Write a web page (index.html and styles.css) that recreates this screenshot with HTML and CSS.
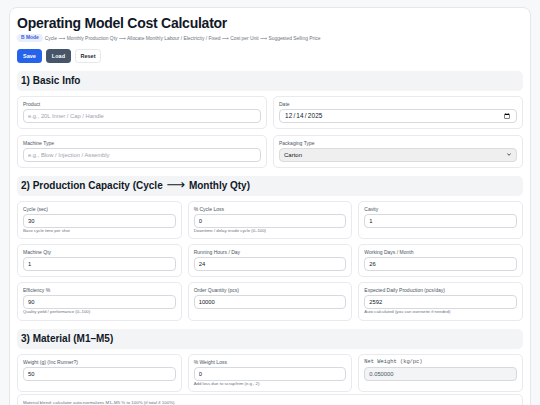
FILE: index.html
```html
<!DOCTYPE html>
<html lang="en">
<head>
<meta charset="utf-8">
<title>Operating Model Cost Calculator</title>
<link rel="stylesheet" href="styles.css">
</head>
<body>
<div class="wrap">
  <h1 class="title">Operating Model Cost Calculator</h1>
  <div class="sub">
    <span class="badge">B Mode</span>
    <span class="flow">Cycle <span class="arr">⟶</span> Monthly Production Qty <span class="arr">⟶</span> Allocate Monthly Labour / Electricity / Fixed <span class="arr">⟶</span> Cost per Unit <span class="arr">⟶</span> Suggested Selling Price</span>
  </div>
  <div class="actions">
    <button class="btn btn-save">Save</button>
    <button class="btn btn-load">Load</button>
    <button class="btn btn-reset">Reset</button>
  </div>

  <h2 class="section">1) Basic Info</h2>
  <div class="grid grid-2">
    <div class="field">
      <label class="lbl">Product</label>
      <input class="inp" type="text" placeholder="e.g., 20L Inner / Cap / Handle">
    </div>
    <div class="field">
      <label class="lbl">Date</label>
      <input class="inp inp-date" type="date" value="2025-12-14">
    </div>
    <div class="field">
      <label class="lbl">Machine Type</label>
      <input class="inp" type="text" placeholder="e.g., Blow / Injection / Assembly">
    </div>
    <div class="field">
      <label class="lbl">Packaging Type</label>
      <div class="sel-wrap">
        <select class="inp sel"><option>Carton</option></select>
        <svg class="chev" viewBox="0 0 8 5" width="4" height="3"><path d="M1 1 L4 4 L7 1" fill="none" stroke="#222" stroke-width="1.6" stroke-linecap="round" stroke-linejoin="round"/></svg>
      </div>
    </div>
  </div>

  <h2 class="section">2) Production Capacity (Cycle <span class="arr arr-lg">⟶</span> Monthly Qty)</h2>
  <div class="grid grid-3">
    <div class="field">
      <label class="lbl">Cycle (sec)</label>
      <input class="inp" type="text" value="30">
      <div class="hint">Base cycle time per shot</div>
    </div>
    <div class="field">
      <label class="lbl">% Cycle Loss</label>
      <input class="inp" type="text" value="0">
      <div class="hint">Downtime / delay inside cycle (0–100)</div>
    </div>
    <div class="field">
      <label class="lbl">Cavity</label>
      <input class="inp" type="text" value="1">
    </div>
    <div class="field">
      <label class="lbl">Machine Qty</label>
      <input class="inp" type="text" value="1">
    </div>
    <div class="field">
      <label class="lbl">Running Hours / Day</label>
      <input class="inp" type="text" value="24">
    </div>
    <div class="field">
      <label class="lbl">Working Days / Month</label>
      <input class="inp" type="text" value="26">
    </div>
    <div class="field">
      <label class="lbl">Efficiency %</label>
      <input class="inp" type="text" value="90">
      <div class="hint">Quality yield / performance (0–100)</div>
    </div>
    <div class="field">
      <label class="lbl">Order Quantity (pcs)</label>
      <input class="inp" type="text" value="10000">
    </div>
    <div class="field">
      <label class="lbl">Expected Daily Production (pcs/day)</label>
      <input class="inp" type="text" value="2592">
      <div class="hint">Auto calculated (you can overwrite if needed)</div>
    </div>
  </div>

  <h2 class="section">3) Material (M1–M5)</h2>
  <div class="grid grid-3">
    <div class="field">
      <label class="lbl">Weight (g) (Inc Runner?)</label>
      <input class="inp" type="text" value="50">
    </div>
    <div class="field">
      <label class="lbl">% Weight Loss</label>
      <input class="inp" type="text" value="0">
      <div class="hint">Add loss due to scrap/trim (e.g., 2)</div>
    </div>
    <div class="field">
      <label class="lbl lbl-mono">Net Weight (kg/pc)</label>
      <input class="inp inp-ro" type="text" value="0.050000" readonly>
    </div>
  </div>
  <div class="note">Material blend: calculator auto-normalizes M1–M5 % to 100% (if total ≠ 100%).</div>
</div>
</body>
</html>
```
FILE: styles.css
```css
* { box-sizing: border-box; }
html, body { margin: 0; padding: 0; }
body {
  background: #f7f8fa;
  font-family: "Liberation Sans", Arial, sans-serif;
  color: #111827;
}
.wrap {
  margin: 7px 9px 0;
  background: #ffffff;
  border: 1px solid #e5e7eb;
  border-radius: 8px;
  padding: 7px 7px 20px;
}
.title {
  margin: 0;
  font-size: 14px;
  line-height: 16px;
  font-weight: 700;
  letter-spacing: -0.25px;
  color: #111827;
}
.sub {
  margin-top: 3px;
  height: 8px;
  display: flex;
  align-items: center;
  gap: 2px;
}
.badge {
  display: inline-block;
  height: 8px;
  line-height: 8px;
  padding: 0 4px;
  border-radius: 4px;
  background: #e8eefd;
  color: #3b5bdb;
  font-size: 4.9px;
  font-weight: 600;
}
.flow {
  font-size: 4.9px;
  color: #6b7280;
  white-space: nowrap;
}
.arr {
  font-family: "DejaVu Sans", sans-serif;
  font-weight: 400;
}
.arr-lg { font-size: 1.3em; line-height: 0; margin: 0 1px; }
.actions {
  margin-top: 7px;
  display: flex;
  gap: 4px;
}
.btn {
  height: 14px;
  padding: 0 5px;
  border-radius: 3.5px;
  font-family: "Liberation Sans", Arial, sans-serif;
  font-size: 5.5px;
  font-weight: 700;
  border: 1px solid transparent;
  cursor: pointer;
}
.btn-save { background: #2563eb; color: #ffffff; }
.btn-load { background: #475569; color: #ffffff; }
.btn-reset { background: #ffffff; color: #1f2937; border-color: #e5e7eb; padding: 0 4.5px; }
.section {
  margin: 8px 0 5px;
  height: 20px;
  line-height: 20px;
  padding: 0 4px;
  background: #f3f4f6;
  border-radius: 5px;
  font-size: 10px;
  font-weight: 700;
  color: #111827;
}
.grid {
  display: grid;
  column-gap: 6px;
  row-gap: 5.5px;
}
.grid-2 { grid-template-columns: 1fr 1fr; }
.grid-3 { grid-template-columns: 1fr 1fr 1fr; row-gap: 5px; }
.field {
  border: 1px solid #e9eaee;
  border-radius: 5px;
  padding: 4px 5px 5px;
  background: #ffffff;
}
.lbl {
  display: block;
  font-size: 5px;
  line-height: 7px;
  color: #4b5563;
  margin-bottom: 1px;
  white-space: nowrap;
}
.lbl-mono {
  font-family: "Liberation Mono", "Courier New", monospace;
  font-size: 5.4px;
}
.inp {
  display: block;
  width: 100%;
  height: 14px;
  margin: 0;
  padding: 0 4px;
  border: 1px solid #d6d9de;
  border-radius: 4px;
  background: #ffffff;
  font-family: "Liberation Sans", Arial, sans-serif;
  font-size: 5.8px;
  color: #111827;
  outline: none;
}
.inp::placeholder { color: #9ca3af; }
.inp-date { font-size: 6.4px; letter-spacing: 0.15px; }
.sel-wrap { position: relative; }
.sel {
  appearance: none;
  -webkit-appearance: none;
  background: #efefef;
  border-color: #dcdcdc;
  color: #111827;
  font-size: 6px;
}
.chev {
  position: absolute;
  right: 6px;
  top: 5.5px;
  width: 4px;
  height: 3px;
}
.inp-ro {
  background: #f3f4f6;
  color: #4b5563;
}
.hint {
  margin-top: 1px;
  font-size: 4.3px;
  line-height: 4.5px;
  color: #6b7280;
  white-space: nowrap;
}
.note {
  margin-top: 2px;
  border: 1px solid #e9eaee;
  border-radius: 5px;
  padding: 5px 5px;
  font-size: 4.4px;
  line-height: 6px;
  color: #6b7280;
}
```
